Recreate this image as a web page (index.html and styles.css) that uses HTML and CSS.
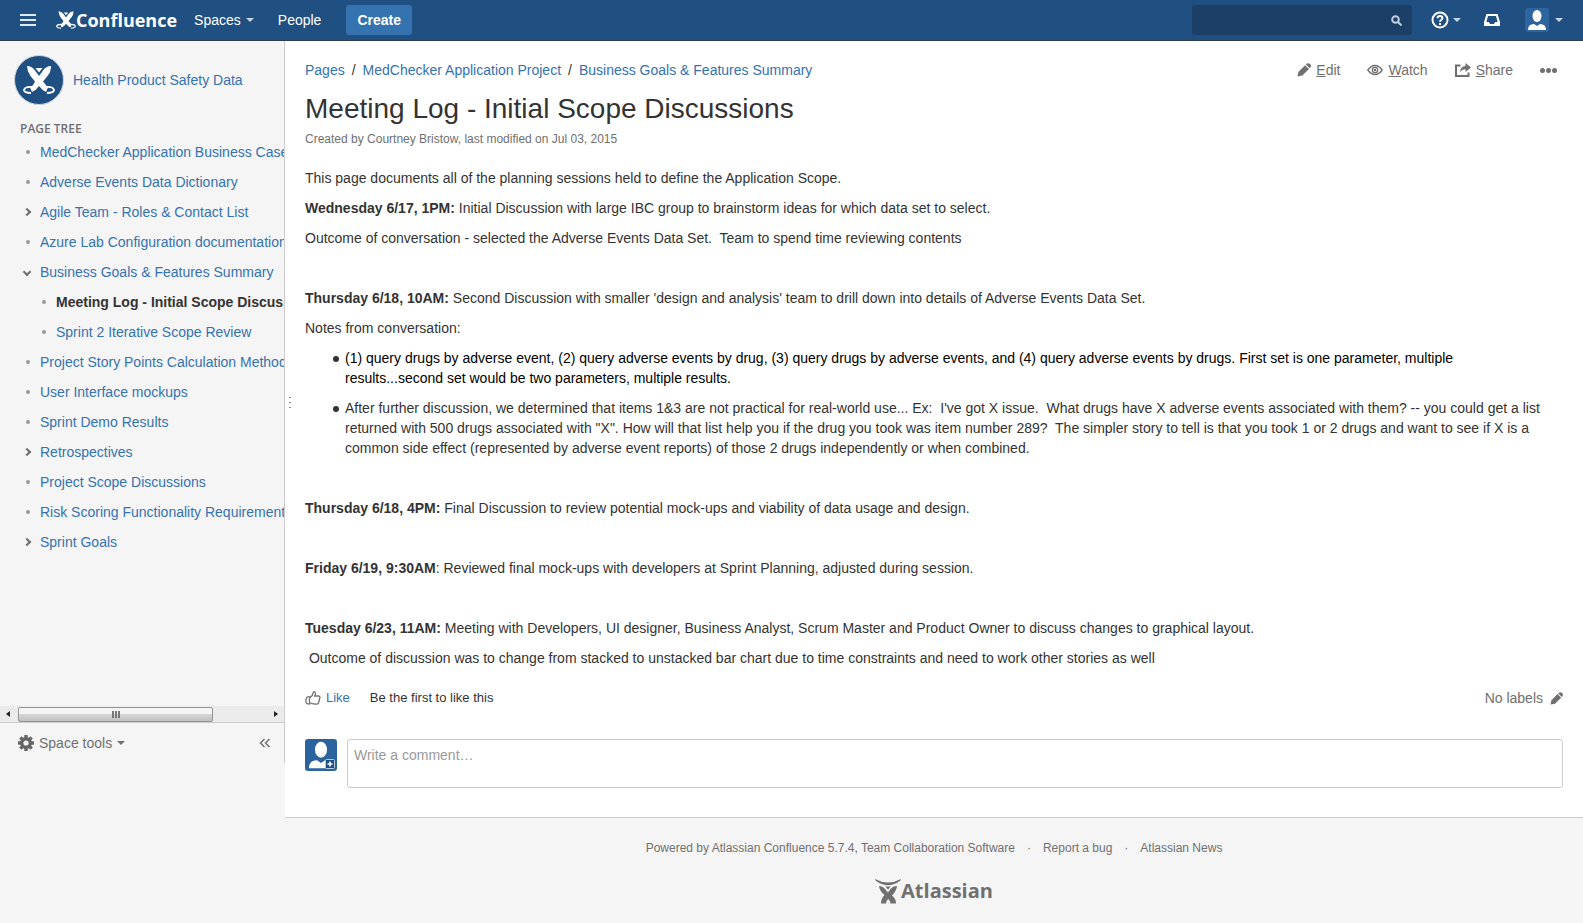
FILE: index.html
```html
<!DOCTYPE html>
<html lang="en">
<head>
<meta charset="utf-8">
<title>Meeting Log - Initial Scope Discussions</title>
<link rel="stylesheet" href="styles.css">
</head>
<body>
<svg class="defs" aria-hidden="true">
  <symbol id="pencil" viewBox="0 0 14 14"><path d="M.5 13.500L1.500 8.800 8.100 2.200 12 6.100 5.400 12.600z M8.900 1.500q2-2.200 4.100-.4t-.2 4.200z"/></symbol>
  <symbol id="mark" viewBox="0 0 32 28"><path d="M4 0Q9 0 12 4.500L16 10 20 4.500Q23 0 28 0 28 6 24.500 10L20 15.500 25 21.500 23 26Q19 24 16 20 13 24.500 9 26L7 21.500Q11 19 12 15.500L7.500 10Q4 5 4 0z"/><path d="M12.500 2h7L16 6.500z"/><path d="M9 21Q2 20.500 1 24 1.500 27 8 27M23 21q7-.5 8 3-.5 3-7 3" fill="none" stroke="currentColor" stroke-width="1.800"/></symbol>
  <symbol id="person" viewBox="0 0 24 24"><ellipse cx="12" cy="8" rx="4.500" ry="6"/><path d="M3 22q0-6 6-6l3 2 3-2q6 0 6 6z"/></symbol>
</svg>

<header class="topbar">
  <button class="menu-btn" aria-label="Menu"><i></i><i></i><i></i></button>
  <a class="brand" href="#"><svg class="brand-mark"><use href="#mark"/></svg><span>Confluence</span></a>
  <a class="nav-link spaces" href="#">Spaces<i class="caret"></i></a>
  <a class="nav-link" href="#">People</a>
  <button class="create">Create</button>
  <form class="search">
    <input type="text" aria-label="Search">
    <svg class="search-icon" viewBox="0 0 12 12"><circle cx="4.500" cy="4.500" r="3.300"/><path d="M7 7l3.500 3.500"/></svg>
  </form>
  <button class="top-icon help" aria-label="Help"><svg viewBox="0 0 18 18" width="18" height="18"><circle cx="9" cy="9" r="7.500" fill="none" stroke="currentColor" stroke-width="2"/><path d="M6.500 7.200Q6.600 5 9 5t2.500 2.100Q11.500 8.300 10 9.100 9 9.600 9 10.800" fill="none" stroke="currentColor" stroke-width="2"/><rect x="8" y="12" width="2" height="2" fill="currentColor"/></svg><i class="caret"></i></button>
  <button class="top-icon tray" aria-label="Notifications"><svg viewBox="0 0 18 14" width="18" height="14"><path fill="currentColor" fill-rule="evenodd" d="M3.500 1h11l2.500 8v4H1V9zM5 3L3.400 9h2.400l1.200 2h4l1.200-2h2.400L13 3z"/></svg></button>
  <button class="top-icon user" aria-label="Profile"><svg class="avatar-sm"><use href="#person"/></svg><i class="caret"></i></button>
</header>

<div class="shell">
  <aside class="sidebar">
    <a class="space" href="#"><span class="space-logo"><svg><use href="#mark"/></svg></span>Health Product Safety Data</a>
    <h2 class="tree-title">PAGE TREE</h2>
    <ul class="tree">
      <li><i class="dot"></i><a href="#">MedChecker Application Business Case</a></li>
      <li><i class="dot"></i><a href="#">Adverse Events Data Dictionary</a></li>
      <li><i class="chev"></i><a href="#">Agile Team - Roles &amp; Contact List</a></li>
      <li><i class="dot"></i><a href="#">Azure Lab Configuration documentation</a></li>
      <li><i class="chev open"></i><a href="#">Business Goals &amp; Features Summary</a></li>
      <li class="sub"><i class="dot"></i><a class="current" href="#">Meeting Log - Initial Scope Discussions</a></li>
      <li class="sub"><i class="dot"></i><a href="#">Sprint 2 Iterative Scope Review</a></li>
      <li><i class="dot"></i><a href="#">Project Story Points Calculation Method</a></li>
      <li><i class="dot"></i><a href="#">User Interface mockups</a></li>
      <li><i class="dot"></i><a href="#">Sprint Demo Results</a></li>
      <li><i class="chev"></i><a href="#">Retrospectives</a></li>
      <li><i class="dot"></i><a href="#">Project Scope Discussions</a></li>
      <li><i class="dot"></i><a href="#">Risk Scoring Functionality Requirements</a></li>
      <li><i class="chev"></i><a href="#">Sprint Goals</a></li>
    </ul>
    <div class="scrollbar"><i class="arrow left"></i><div class="track"><div class="thumb"><i></i><i></i><i></i></div></div><i class="arrow right"></i></div>
    <div class="tools">
      <button class="space-tools"><svg viewBox="0 0 16 16" width="16" height="16"><g fill="#666"><circle cx="8" cy="8" r="6"/><g id="teeth"><rect x="6.300" y="0" width="3.400" height="16"/><rect x="0" y="6.300" width="16" height="3.400"/></g><use href="#teeth" transform="rotate(45 8 8)"/></g><circle cx="8" cy="8" r="2.600" fill="#f5f5f5"/></svg>Space tools<i class="caret"></i></button>
      <button class="collapse" aria-label="Collapse sidebar"><svg viewBox="0 0 12 10" width="12" height="10"><path d="M5.500 1l-4 4 4 4M10.500 1l-4 4 4 4" fill="none" stroke="#707070" stroke-width="1.500"/></svg></button>
    </div>
  </aside>

  <div class="column">
    <div class="splitter"><i></i><i></i><i></i></div>
    <main class="page">
      <div class="page-top">
        <nav class="crumbs"><a href="#">Pages</a><span>/</span><a href="#">MedChecker Application Project</a><span>/</span><a href="#">Business Goals &amp; Features Summary</a></nav>
        <div class="actions">
          <a href="#"><svg width="14" height="14"><use href="#pencil"/></svg><span><u>E</u>dit</span></a>
          <a href="#"><svg viewBox="0 0 16 12" width="16" height="12" fill="none" stroke="currentColor" stroke-width="1.300"><path d="M.8 6Q4 1.500 8 1.500T15.200 6Q12 10.500 8 10.500T.8 6z"/><circle cx="8" cy="6" r="2.700"/><circle cx="8" cy="6" r=".6"/></svg><span><u>W</u>atch</span></a>
          <a href="#"><svg viewBox="0 0 16 14" width="16" height="14"><path d="M5.500 2.500H1V13h12.500V9.500" fill="none" stroke="currentColor" stroke-width="2"/><path d="M10.500 0L16 4.500 10.500 9V6.200Q7 6 5 9 5.500 3.500 10.500 3z"/></svg><span><u>S</u>hare</span></a>
          <button class="more" aria-label="More"><i></i><i></i><i></i></button>
        </div>
      </div>
      <h1>Meeting Log - Initial Scope Discussions</h1>
      <p class="meta">Created by <a href="#">Courtney Bristow</a>, last modified on <a href="#">Jul 03, 2015</a></p>
      <article class="content">
        <p>This page documents all of the planning sessions held to define the Application Scope.</p>
        <p><b>Wednesday 6/17, 1PM:</b> Initial Discussion with large IBC group to brainstorm ideas for which data set to select.</p>
        <p>Outcome of conversation - selected the Adverse Events Data Set.&nbsp; Team to spend time reviewing contents</p>
        <p>&nbsp;</p>
        <p><b>Thursday 6/18, 10AM:</b> Second Discussion with smaller 'design and analysis' team to drill down into details of Adverse Events Data Set.</p>
        <p>Notes from conversation:</p>
        <ul>
          <li class="dark">(1) query drugs by adverse event, (2) query adverse events by drug, (3) query drugs by adverse events, and (4) query adverse events by drugs. First set is one parameter, multiple results...second set would be two parameters, multiple results.</li>
          <li>After further discussion, we determined that items 1&amp;3 are not practical for real-world use... Ex:&nbsp; I've got X issue.&nbsp; What drugs have X adverse events associated with them? -- you could get a list returned with 500 drugs associated with "X". How will that list help you if the drug you took was item number 289?&nbsp; The simpler story to tell is that you took 1 or 2 drugs and want to see if X is a common side effect (represented by adverse event reports) of those 2 drugs independently or when combined.</li>
        </ul>
        <p>&nbsp;</p>
        <p><b>Thursday 6/18, 4PM:</b> Final Discussion to review potential mock-ups and viability of data usage and design.</p>
        <p>&nbsp;</p>
        <p><b>Friday 6/19, 9:30AM</b>: Reviewed final mock-ups with developers at Sprint Planning, adjusted during session.</p>
        <p>&nbsp;</p>
        <p><b>Tuesday 6/23, 11AM:</b> Meeting with Developers, UI designer, Business Analyst, Scrum Master and Product Owner to discuss changes to graphical layout.</p>
        <p>&nbsp;Outcome of discussion was to change from stacked to unstacked bar chart due to time constraints and need to work other stories as well</p>
      </article>
      <div class="feedback">
        <button class="like"><svg viewBox="0 0 16 14" width="16" height="14" fill="none" stroke="#707070" stroke-width="1.300"><path d="M5 6.500Q8 4.500 8.200 1.500 8.500.4 9.600.8 11.200 1.800 9.800 5H14q1.300.5.800 2L13.500 12q-.5 1.300-2 1.200-3.500 0-6-1.200"/><path d="M5 5.800H2.500Q.8 7 .8 9.500T2.500 12.800H5q-1.500-3.500 0-7z"/></svg>Like</button>
        <span>Be the first to like this</span>
        <span class="labels">No labels<button aria-label="Edit labels"><svg width="13" height="13"><use href="#pencil"/></svg></button></span>
      </div>
      <form class="comment">
        <span class="avatar"><svg class="face"><use href="#person"/></svg><svg class="plus" viewBox="0 0 10 10"><rect x=".5" y=".5" width="9" height="9" rx="1" fill="#205081" stroke="#b8cbe0"/><path d="M5 2.500v5M2.500 5h5" stroke="#fff" stroke-width="1.500"/></svg></span>
        <textarea aria-label="Write a comment" placeholder="Write a comment…"></textarea>
      </form>
    </main>
    <footer>
      <div class="foot-links"><a href="#">Powered by Atlassian Confluence 5.7.4, Team Collaboration Software</a><span>·</span><a href="#">Report a bug</a><span>·</span><a href="#">Atlassian News</a></div>
      <a class="atlassian" href="#"><svg viewBox="0 0 26 25" width="26" height="25" fill="currentColor"><path d="M0 0q13 7 26 0l-.5 1.500Q13 11 .5 1.500z"/><path d="M4 7q4 0 6.500 3.500L13 13.500l2.500-3.500Q18 7 22 7q-.5 5-5 9.500 4 3 4 8h-5.500q0-3-2.300-4.500-2.200 1.500-2.200 4.500H6q0-5 3.500-8.500Q4.500 12 4 7z"/><path d="M10.500 7.500h5L13 10.700z"/></svg><span>Atlassian</span></a>
    </footer>
  </div>
</div>
</body>
</html>
```
FILE: styles.css
```css
* { box-sizing: border-box; }
body {
  margin: 0;
  background: #f5f5f5;
  color: #333;
  font: 14px/20px "Liberation Sans", Arial, sans-serif;
}
a { color: #3572b0; text-decoration: none; }
button { border: 0; padding: 0; background: none; font: inherit; color: inherit; cursor: pointer; }
p, h1, h2, ul { margin: 0; padding: 0; }
svg { display: block; flex: none; }
.defs { position: absolute; width: 0; height: 0; }
.caret {
  display: inline-block;
  flex: none;
  border: 4px solid transparent;
  border-top-color: currentColor;
  border-bottom: 0;
}

.topbar {
  display: flex;
  align-items: center;
  height: 41px;
  padding: 0 20px;
  background: #205081;
  border-bottom: 1px solid #2e3d54;
  color: #fff;
}
.menu-btn { display: grid; gap: 3px; width: 16px; }
.menu-btn i { height: 2px; background: #deebf7; }
.brand { display: flex; align-items: center; margin-left: 20px; color: #fff; }
.brand span { font: bold 18px/20px "Open Sans", sans-serif; }
.brand-mark { width: 20px; height: 18px; fill: currentColor; }
.nav-link { color: #fff; margin-left: 24px; }
.spaces { display: flex; align-items: center; gap: 5px; margin-left: 17px; }
.spaces .caret, .top-icon .caret { color: #c5d5e6; }
.create {
  height: 30px;
  margin-left: 25px;
  padding: 0 11px;
  border-radius: 3px;
  background: #3572b0;
  font-weight: bold;
}
.search {
  display: flex;
  align-items: center;
  width: 220px;
  height: 30px;
  margin-left: auto;
  padding: 2px 9px 0;
  border-radius: 3px;
  background: #1b3f66;
}
.search input { flex: 1; min-width: 0; border: 0; background: none; color: #fff; font: inherit; outline: 0; }
.search-icon { width: 12px; height: 12px; fill: none; stroke: #c0cfde; stroke-width: 2; }
.top-icon { display: flex; align-items: center; }
.help { gap: 4px; margin-left: 19px; }
.tray { margin-left: 22px; }
.user { gap: 6px; margin-left: 24px; }
.avatar-sm { width: 24px; height: 24px; border-radius: 3px; background: #2f659e; fill: #fff; }

.shell { display: flex; align-items: flex-start; }
.sidebar {
  flex: none;
  width: 285px;
  border-right: 1px solid #ccc;
}
.space { display: flex; align-items: center; gap: 9px; padding: 14px 14px 0; }
.space-logo {
  display: grid;
  place-items: center;
  width: 50px;
  height: 50px;
  border: 1px solid #ccd6e0;
  border-radius: 50%;
  background: #205081;
  color: #fff;
}
.space-logo svg { width: 32px; height: 28px; fill: #fff; }
.tree-title { padding: 16px 20px 0; font: 600 12px/16px "Open Sans", sans-serif; color: #707070; }
.tree { height: 569px; overflow: hidden; list-style: none; }
.tree li { display: flex; align-items: center; height: 30px; padding-left: 20px; white-space: nowrap; }
.tree li.sub { padding-left: 36px; }
.tree li > i { flex: none; }
.dot { width: 4px; height: 4px; margin: 0 10px 0 6px; border-radius: 50%; background: #999; }
.chev {
  width: 6px;
  height: 6px;
  margin: 0 10px 0 4px;
  border: solid #707070;
  border-width: 2px 2px 0 0;
  transform: rotate(45deg);
}
.chev.open { transform: rotate(135deg); }
.current { color: #333; font-weight: bold; }
.scrollbar {
  display: flex;
  align-items: center;
  height: 17px;
  padding: 0 6px;
  background: #ebebeb;
  border-bottom: 1px solid #ccc;
}
.track { flex: 1; padding: 0 61px 0 8px; }
.thumb {
  display: flex;
  justify-content: center;
  align-items: center;
  gap: 1px;
  height: 15px;
  border: 1px solid #979797;
  border-radius: 2px;
  background: linear-gradient(#f4f4f4 0 45%, #d6d6d6 50%, #bfbfc1);
}
.thumb i { width: 2px; height: 7px; background: #777; }
.arrow { border: 3px solid transparent; }
.arrow.left { border-right: 4px solid #222; border-left: 0; }
.arrow.right { border-left: 4px solid #222; border-right: 0; }
.tools { display: flex; align-items: center; justify-content: space-between; height: 40px; padding: 0 13px 0 18px; color: #707070; }
.space-tools { display: flex; align-items: center; gap: 5px; }

.column { position: relative; flex: 1; min-width: 0; }
.splitter { position: absolute; top: 356px; left: 4px; display: grid; gap: 4px; }
.splitter i { width: 2px; height: 1px; background: #888; }
.page { padding: 19px 20px 29px; background: #fff; border-bottom: 1px solid #ccc; }
.page-top { display: flex; justify-content: space-between; }
.crumbs span { padding: 0 7px; }
.actions { display: flex; align-items: center; padding-right: 6px; gap: 27px; color: #707070; fill: #707070; }
.actions a { display: flex; align-items: center; gap: 5px; color: inherit; }
.more { display: flex; gap: 1px; }
.more i { width: 5px; height: 5px; border-radius: 50%; background: #707070; }
h1 { margin-top: 11px; font-size: 28px; line-height: 36px; font-weight: normal; }
.meta { margin-top: 4px; font-size: 12px; line-height: 16px; color: #707070; }
.meta a, .foot-links a { color: inherit; }
.content { margin-top: 21px; }
.content > * + *, .content li + li { margin-top: 10px; }
.content ul { padding: 0 20px 0 28px; list-style: none; }
.content li { display: flex; gap: 6px; }
.content li::before {
  content: "";
  flex: none;
  width: 6px;
  height: 6px;
  margin-top: 8px;
  border-radius: 50%;
  background: #333;
}
.dark { color: #000; }
.feedback { display: flex; align-items: center; margin-top: 20px; font-size: 13px; }
.like { display: flex; align-items: center; gap: 5px; margin-right: 20px; color: #3572b0; }
.labels { display: flex; align-items: center; gap: 7px; margin-left: auto; font-size: 14px; color: #707070; fill: #707070; }
.comment { display: flex; align-items: flex-start; gap: 10px; margin-top: 31px; }
.avatar { position: relative; flex: none; width: 32px; height: 32px; border-radius: 3px; background: #2a639d; }
.face { width: 32px; height: 32px; fill: #fff; }
.plus { position: absolute; right: 2px; bottom: 2px; width: 10px; height: 10px; }
.comment textarea {
  flex: 1;
  height: 49px;
  padding: 5px 6px;
  border: 1px solid #ccc;
  border-radius: 3px;
  background: #fff;
  font: inherit;
  resize: none;
}
.comment textarea::placeholder { color: #999; }
footer { display: flex; flex-direction: column; align-items: center; padding: 20px 20px 18px; color: #707070; }
.foot-links { font-size: 12px; line-height: 20px; }
.foot-links span { padding: 0 12px; }
.atlassian { display: flex; align-items: center; margin-top: 19px; color: #707070; }
.atlassian span { font: bold 20px/28px "Open Sans", sans-serif; }
```
